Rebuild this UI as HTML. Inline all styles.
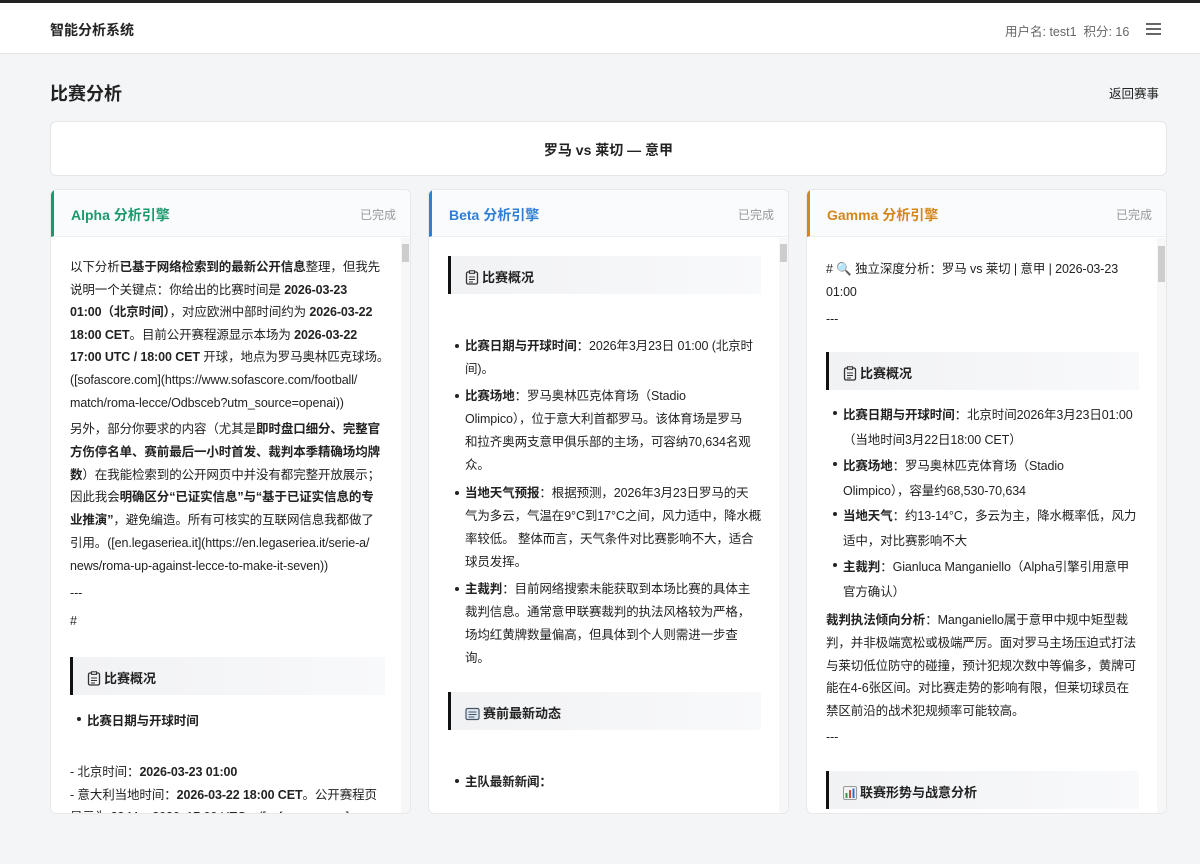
<!DOCTYPE html>
<html><head><meta charset="utf-8"><style>
*{margin:0;padding:0;box-sizing:border-box}
body{width:1200px;height:864px;overflow:hidden;background:#f4f5f7;font-family:"Liberation Sans","Noto Sans CJK SC",sans-serif;color:#222;position:relative;font-size:13px}
.top{position:absolute;left:0;top:0;width:1200px;height:54px;background:#fff;border-top:3px solid #222;border-bottom:1px solid #e2e4e8}
.abs{position:absolute;white-space:nowrap}
.card{position:absolute;top:189px;width:361px;height:625px;background:#fff;border:1px solid #e6e8ec;border-radius:6px;overflow:hidden}
.ch{position:absolute;left:0;top:0;right:0;height:47px;background:#fafbfc;border-bottom:1px solid #eceef1;border-left:3px solid}
.ch b{position:absolute;left:17px;top:15px;font-size:14px}
.ch span{position:absolute;right:14px;top:16px;font-size:12px;color:#999}
.sb{position:absolute;right:0;top:48px;width:9px;bottom:0;background:#f7f7f7}
.sb i{position:absolute;left:1px;top:6px;width:7px;height:18px;background:#cdcdcd}
.t{position:absolute;white-space:nowrap;font-size:12.5px;color:#222;letter-spacing:-0.1px}
.h{position:absolute;height:38px;background:linear-gradient(90deg,#f1f2f4,#f8f9fa);border-left:3px solid #111;font-weight:bold;font-size:13px;padding:11px 0 0 14px}
.h svg{vertical-align:-3px;margin-right:3px}
.dot{position:absolute;width:4px;height:4px;border-radius:50%;background:#222}
</style></head><body>
<div class="top"></div>
<div class="abs" style="left:50px;top:20px;font-size:14px;font-weight:bold">智能分析系统</div>
<div class="abs" style="left:1005px;top:21px;font-size:12.5px;color:#666">用户名: test1 &nbsp;积分: 16</div>
<div class="abs" style="left:1146px;top:23px;width:15px;height:12px;border-top:2px solid #666;border-bottom:2px solid #666"><div style="margin-top:3px;height:2px;background:#666"></div></div>
<div class="abs" style="left:50px;top:80px;font-size:18px;font-weight:bold">比赛分析</div>
<div class="abs" style="left:1109px;top:83px;font-size:12.5px;color:#222">返回赛事</div>
<div class="abs" style="left:50px;top:121px;width:1117px;height:55px;background:#fff;border:1px solid #e3e5e9;border-radius:6px"></div>
<div class="abs" style="left:0;width:1217px;text-align:center;top:140px;font-size:14px;font-weight:bold">罗马 vs 莱切 — 意甲</div>

<!-- Alpha -->
<div class="card" style="left:50px">
<div class="ch" style="border-left-color:#1a9a6c"><b style="color:#1a9a6c">Alpha 分析引擎</b><span>已完成</span></div>
<div class="sb"><i></i></div>
<div class="t" style="left:19px;top:66px;line-height:22.6px">以下分析<b>已基于网络检索到的最新公开信息</b>整理，但我先<br>说明一个关键点：你给出的比赛时间是 <b>2026-03-23<br>01:00（北京时间）</b>，对应欧洲中部时间约为 <b>2026-03-22<br>18:00 CET</b>。目前公开赛程源显示本场为 <b>2026-03-22<br>17:00 UTC / 18:00 CET</b> 开球，地点为罗马奥林匹克球场。<br>([sofascore.com](https://www.sofascore.com/football/<br>match/roma-lecce/Odbsceb?utm_source=openai))</div>
<div class="t" style="left:19px;top:228px;line-height:22.8px">另外，部分你要求的内容（尤其是<b>即时盘口细分、完整官<br>方伤停名单、赛前最后一小时首发、裁判本季精确场均牌<br>数</b>）在我能检索到的公开网页中并没有都完整开放展示；<br>因此我会<b>明确区分“已证实信息”与“基于已证实信息的专<br>业推演”</b>，避免编造。所有可核实的互联网信息我都做了<br>引用。([en.legaseriea.it](https://en.legaseriea.it/serie-a/<br>news/roma-up-against-lecce-to-make-it-seven))</div>
<div class="t" style="left:19px;top:396px">---</div>
<div class="t" style="left:19px;top:424px">#</div>
<div class="h" style="left:19px;top:467px;width:315px"><svg width="14" height="15" viewBox="0 0 14 15"><rect x="1.5" y="2" width="11" height="12" rx="1.5" fill="none" stroke="#333" stroke-width="1.3"/><rect x="4.5" y="0.8" width="5" height="2.5" fill="#fff" stroke="#333" stroke-width="1.1"/><path d="M4 7h6M4 9.5h6M4 12h4" stroke="#333" stroke-width="1"/></svg>比赛概况</div>
<div class="dot" style="left:26px;top:527px"></div>
<div class="t" style="left:36px;top:520px;font-weight:bold">比赛日期与开球时间</div>
<div class="t" style="left:19px;top:571px;line-height:22.6px">- 北京时间：<b>2026-03-23 01:00</b><br>- 意大利当地时间：<b>2026-03-22 18:00 CET</b>。公开赛程页<br>显示为 22 Mar 2026, 17:00 UTC。([sofascore.com]</div>
</div>

<!-- Beta -->
<div class="card" style="left:428px">
<div class="ch" style="border-left-color:#2f7fd6"><b style="color:#2f7fd6">Beta 分析引擎</b><span>已完成</span></div>
<div class="sb"><i></i></div>
<div class="h" style="left:19px;top:66px;width:313px"><svg width="14" height="15" viewBox="0 0 14 15"><rect x="1.5" y="2" width="11" height="12" rx="1.5" fill="none" stroke="#333" stroke-width="1.3"/><rect x="4.5" y="0.8" width="5" height="2.5" fill="#fff" stroke="#333" stroke-width="1.1"/><path d="M4 7h6M4 9.5h6M4 12h4" stroke="#333" stroke-width="1"/></svg>比赛概况</div>
<div class="dot" style="left:26px;top:154px"></div>
<div class="t" style="left:36px;top:145px;line-height:22.8px"><b>比赛日期与开球时间</b>：2026年3月23日 01:00 (北京时<br>间)。</div>
<div class="dot" style="left:26px;top:204px"></div>
<div class="t" style="left:36px;top:195px;line-height:23px"><b>比赛场地</b>：罗马奥林匹克体育场（Stadio<br>Olimpico），位于意大利首都罗马。该体育场是罗马<br>和拉齐奥两支意甲俱乐部的主场，可容纳70,634名观<br>众。</div>
<div class="dot" style="left:26px;top:301px"></div>
<div class="t" style="left:36px;top:292px;line-height:23px"><b>当地天气预报</b>：根据预测，2026年3月23日罗马的天<br>气为多云，气温在9°C到17°C之间，风力适中，降水概<br>率较低。 整体而言，天气条件对比赛影响不大，适合<br>球员发挥。</div>
<div class="dot" style="left:26px;top:397px"></div>
<div class="t" style="left:36px;top:388px;line-height:23px"><b>主裁判</b>：目前网络搜索未能获取到本场比赛的具体主<br>裁判信息。通常意甲联赛裁判的执法风格较为严格，<br>场均红黄牌数量偏高，但具体到个人则需进一步查<br>询。</div>
<div class="h" style="left:19px;top:502px;width:313px"><svg width="15" height="14" viewBox="0 0 15 14"><rect x="1" y="1.5" width="13" height="11" rx="1.5" fill="#dfe8f2" stroke="#456" stroke-width="1.2"/><path d="M3.5 5h8M3.5 7.5h8M3.5 10h6" stroke="#456" stroke-width="1"/></svg>赛前最新动态</div>
<div class="dot" style="left:26px;top:589px"></div>
<div class="t" style="left:36px;top:581px;font-weight:bold">主队最新新闻：</div>
</div>

<!-- Gamma -->
<div class="card" style="left:806px">
<div class="ch" style="border-left-color:#d4861a"><b style="color:#d4861a">Gamma 分析引擎</b><span>已完成</span></div>
<div class="sb"><i style="top:8px;height:36px"></i></div>
<div class="t" style="left:19px;top:68px;line-height:22.5px"># <span style="color:#3b7bd1">🔍</span> 独立深度分析：罗马 vs 莱切 | 意甲 | 2026-03-23<br>01:00</div>
<div class="t" style="left:19px;top:122px">---</div>
<div class="h" style="left:19px;top:162px;width:313px"><svg width="14" height="15" viewBox="0 0 14 15"><rect x="1.5" y="2" width="11" height="12" rx="1.5" fill="none" stroke="#333" stroke-width="1.3"/><rect x="4.5" y="0.8" width="5" height="2.5" fill="#fff" stroke="#333" stroke-width="1.1"/><path d="M4 7h6M4 9.5h6M4 12h4" stroke="#333" stroke-width="1"/></svg>比赛概况</div>
<div class="dot" style="left:26px;top:221px"></div>
<div class="t" style="left:36px;top:213px;line-height:25px"><b>比赛日期与开球时间</b>：北京时间2026年3月23日01:00<br>（当地时间3月22日18:00 CET）</div>
<div class="dot" style="left:26px;top:272px"></div>
<div class="t" style="left:36px;top:264px;line-height:25px"><b>比赛场地</b>：罗马奥林匹克体育场（Stadio<br>Olimpico），容量约68,530-70,634</div>
<div class="dot" style="left:26px;top:322px"></div>
<div class="t" style="left:36px;top:314px;line-height:25px"><b>当地天气</b>：约13-14°C，多云为主，降水概率低，风力<br>适中，对比赛影响不大</div>
<div class="dot" style="left:26px;top:373px"></div>
<div class="t" style="left:36px;top:365px;line-height:25px"><b>主裁判</b>：Gianluca Manganiello（Alpha引擎引用意甲<br>官方确认）</div>
<div class="t" style="left:19px;top:419px;line-height:22.8px"><b>裁判执法倾向分析</b>：Manganiello属于意甲中规中矩型裁<br>判，并非极端宽松或极端严厉。面对罗马主场压迫式打法<br>与莱切低位防守的碰撞，预计犯规次数中等偏多，黄牌可<br>能在4-6张区间。对比赛走势的影响有限，但莱切球员在<br>禁区前沿的战术犯规频率可能较高。</div>
<div class="t" style="left:19px;top:540px">---</div>
<div class="h" style="left:19px;top:581px;width:313px"><svg width="14" height="14" viewBox="0 0 14 14"><rect x="0.5" y="0.5" width="13" height="13" rx="1.5" fill="#f2f2f2" stroke="#999"/><rect x="2.5" y="7" width="2" height="5" fill="#3c9a4a"/><rect x="6" y="4" width="2" height="8" fill="#d04a3a"/><rect x="9.5" y="2.5" width="2" height="9.5" fill="#3a6fc8"/></svg>联赛形势与战意分析</div>
</div>
</body></html>
